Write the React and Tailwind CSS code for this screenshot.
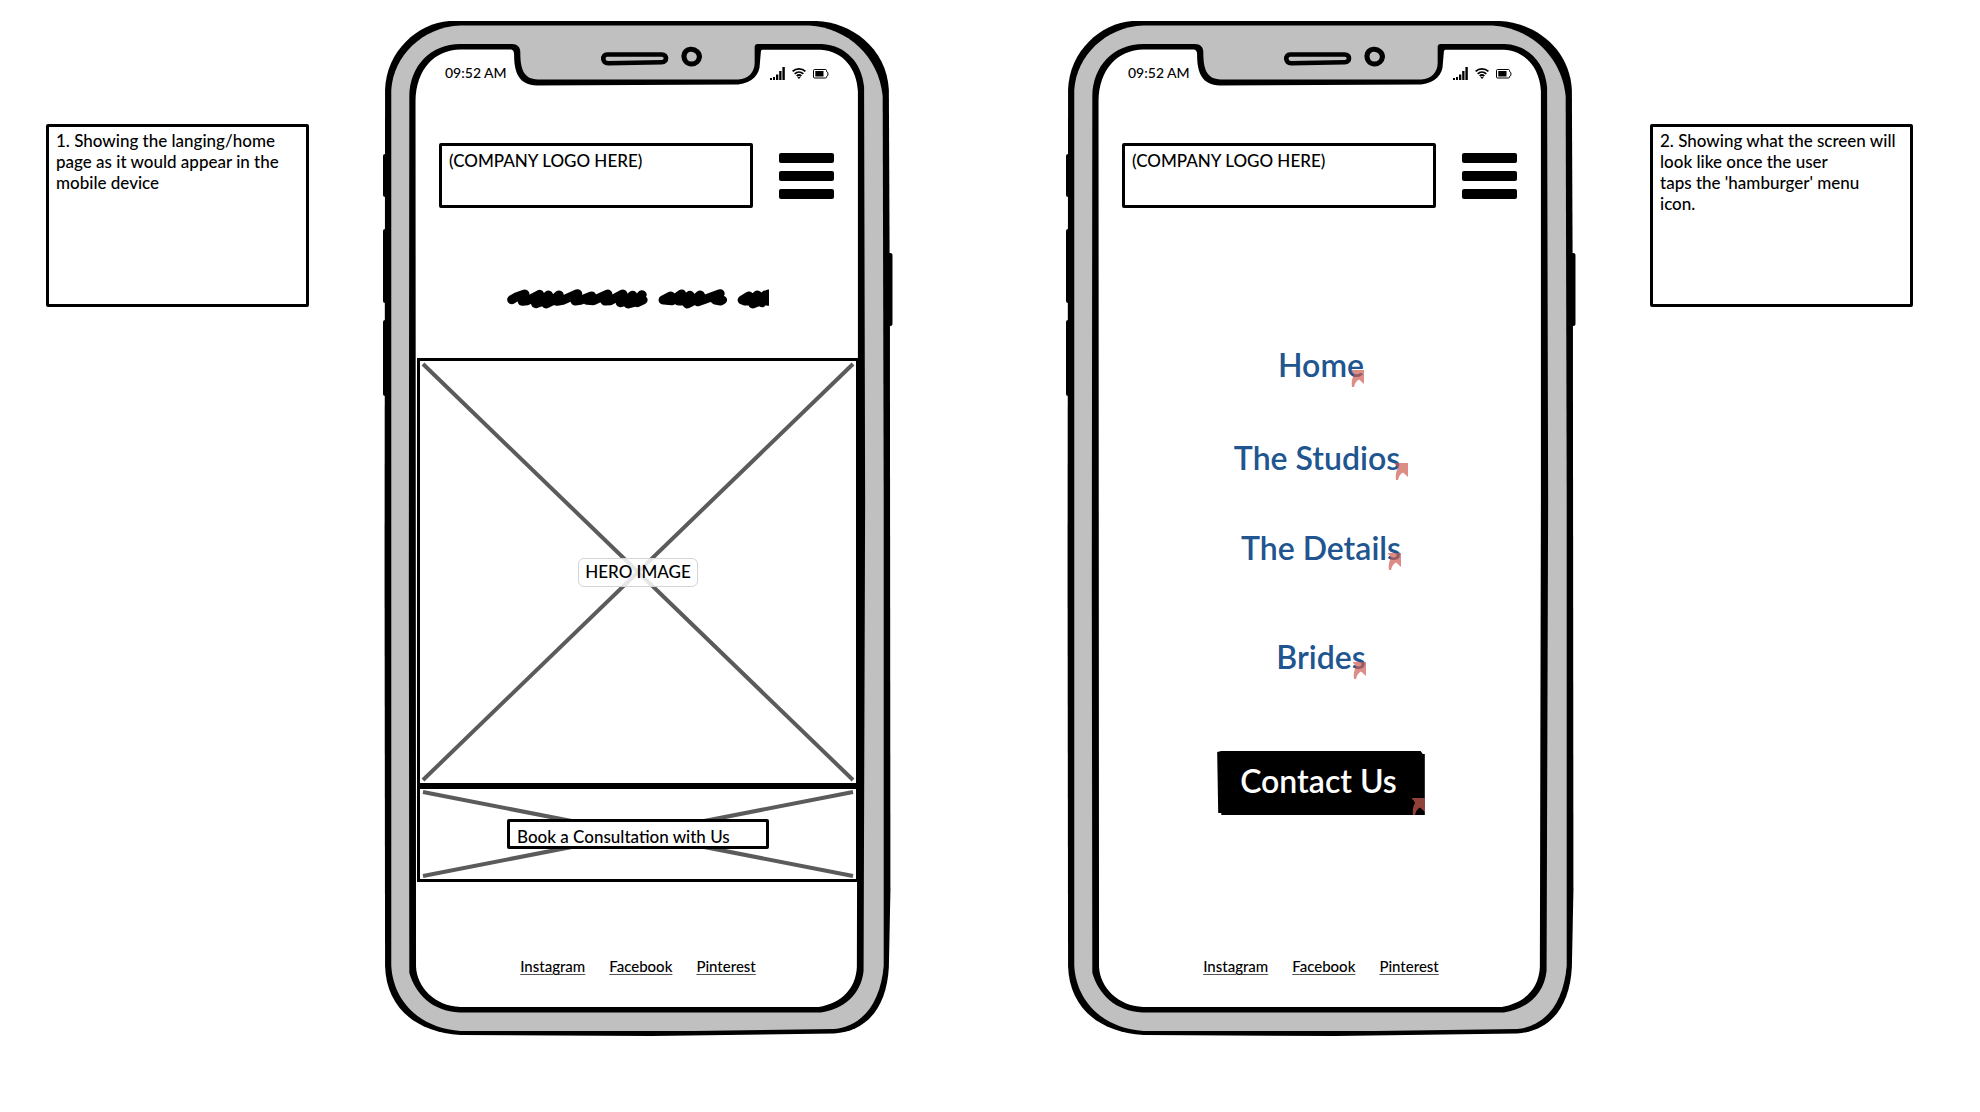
import React from "react";

const SOCIALS = ["Instagram", "Facebook", "Pinterest"];

function DeviceFrame() {
  return (
    <svg
      className="pointer-events-none absolute inset-0 h-full w-full"
      viewBox="0 0 494 1015"
      preserveAspectRatio="none"
      aria-hidden="true"
    >
      <rect x="0" y="133" width="6" height="43" rx="2" />
      <rect x="0" y="208" width="6" height="74" rx="2" />
      <rect x="0" y="299" width="6" height="76" rx="2" />
      <rect x="486" y="232" width="7.5" height="73" rx="2" />
      <path d="M2 69C3 30 34 2 64 0H420C452 1 488 26 490 69L491 300L491.500 870L490 946C488 985 470 1010 437 1012.500L260 1015L75 1014C30 1011 3 985 2 945L1.500 550Z" />
      <path
        fill="#c0c0c0"
        d="M8 69C10 35 38 6 75 4.500H413C450 7 480 35 484 75L485 480L485 945C482 980 466 1005 437 1008L300 1010H75C35 1007 10 980 8 945Z"
      />
      <path d="M25.500 75C26 45 46 23 75 23H125C130 23 133 26 133 31C133 48 136 58 150 58.500H344C354 58 360 51 360 42V26C360 24 361 23 363 23H425C448 24 464 42 466 66L467 480L465.500 950C463 974 446 988 424 991.500H74C48 990 32 974 25.500 952L25 560Z" />
      <path
        fill="#fff"
        d="M31.500 80C32 48 50 29 75 28.500H124C126 29 127 30 127 34C127 52 132 64 149 64.500L344 63.500C358 62 365 53 365 43L366 31C366 29 367 28.700 368 28.700H424C446 30 459 48 460 70L460 480L459 946C458 968 444 982 422 986H75C50 985 33 966 32 946Z"
      />
      <path
        fill="none"
        stroke="#000"
        strokeWidth="4.5"
        d="M217 33.500H270C275.500 33.500 275.500 41 270 41.200L218 42.200C212 42.200 212 33.500 217 33.500Z"
      />
      <path
        fill="none"
        stroke="#000"
        strokeWidth="5"
        d="M298 28.300C303 28 306.500 32 306.500 36C306 40 303 43 299 43C294 43 291.500 39 291.500 35C292 31 294 28.500 298 28.300Z"
      />
    </svg>
  );
}

function StatusIcons() {
  return (
    <div className="flex items-center gap-[7px]">
      <svg width="15" height="13" viewBox="0 0 15 13" role="img" aria-label="Signal strength">
        <rect x="0" y="11" width="2" height="2" />
        <rect x="3" y="10" width="2" height="3" />
        <rect x="6" y="7.5" width="2.300" height="5.500" />
        <rect x="9.200" y="4" width="2.300" height="9" />
        <rect x="12.400" y="0" width="2.400" height="13" />
      </svg>
      <svg width="14" height="13" viewBox="0 0 14 13" fill="none" stroke="#000" role="img" aria-label="Wi-Fi">
        <path strokeWidth="1.800" d="M.6 4.400C4.200 1 9.800 1 13.400 4.400M2.700 6.800C5.200 4.500 8.800 4.500 11.300 6.800M4.700 9C6.100 7.700 7.900 7.700 9.300 9" />
        <path fill="#000" stroke="none" d="M5.400 10.200Q7 9.100 8.600 10.200L7 12Z" />
      </svg>
      <svg width="16" height="13" viewBox="0 0 16 13" role="img" aria-label="Battery">
        <path fill="none" stroke="#000" d="M1.500 2.500H12.500Q13.500 2.500 13.500 3.500V4.500Q15 4.700 15 7T13.500 9.500V10Q13.500 11 12.500 11H1.500Q.5 11 .5 10V3.500Q.5 2.500 1.500 2.500Z" />
        <rect x="2.300" y="4" width="8.200" height="5.500" />
      </svg>
    </div>
  );
}

function Phone({ label, className, children }) {
  return (
    <section
      aria-label={label}
      className={"relative flex min-w-0 flex-1 flex-col px-[34px] pt-[44px] pb-[60px] " + className}
    >
      <DeviceFrame />
      <div className="relative flex items-center justify-between pr-[30px] pl-[28px]">
        <span className="text-sm leading-4">09:52 AM</span>
        <StatusIcons />
      </div>
      <header className="relative mt-[62px] flex items-center gap-[26px] pr-[25px] pl-[22px]">
        <div className="h-[65px] flex-1 rounded-[2px] border-[3px] border-black px-[7px] py-[4px]">
          (COMPANY LOGO HERE)
        </div>
        <button type="button" aria-label="Menu" className="flex w-[55px] flex-col gap-2">
          <span className="h-[10px] rounded-[2px] bg-black" />
          <span className="h-[10px] rounded-[2px] bg-black" />
          <span className="h-[10px] rounded-[2px] bg-black" />
        </button>
      </header>
      <div className="relative flex flex-1 flex-col">{children}</div>
      <footer className="relative flex justify-center gap-[24px] text-[15px] leading-5">
        {SOCIALS.map((name) => (
          <a key={name} href="#" className="underline decoration-[#555] decoration-1 underline-offset-2">
            {name}
          </a>
        ))}
      </footer>
    </section>
  );
}

function Cross() {
  return (
    <svg
      className="absolute inset-[3px] h-[calc(100%-6px)] w-[calc(100%-6px)] overflow-visible"
      aria-hidden="true"
    >
      <g stroke="#5b5b5b" strokeWidth="4">
        <line x1="0" y1="0" x2="100%" y2="100%" />
        <line x1="100%" y1="0" x2="0" y2="100%" />
      </g>
    </svg>
  );
}

function Scribble() {
  return (
    <svg
      className="mt-[81px] self-center"
      width="262"
      height="20"
      viewBox="398 85 765 60"
      preserveAspectRatio="none"
      fill="none"
      stroke="#000"
      strokeWidth="27"
      strokeLinecap="round"
      strokeLinejoin="round"
      role="img"
      aria-label="Headline"
    >
      <path d="M412 117L425 109L450 100L443 122L458 120L493 101L482 129L496 124L519 103L512 130L528 122L550 103L544 122L560 119L604 99L597 121L612 119L645 106L632 119L650 120L692 100L684 121L700 120L736 100L729 126L743 122L765 104L752 130L774 124L792 102L778 126L795 118" />
      <path d="M854 118L876 106L862 119L880 120L908 100L898 121L914 120L932 104L924 130L940 122L962 103L955 123L972 117L1020 99L1006 118L1022 121L1027 118" />
      <path d="M1085 118L1104 106L1092 121L1110 120L1129 103L1116 130L1134 122L1152 103L1142 126L1162 100L1160 122" />
    </svg>
  );
}

function Flag() {
  return (
    <svg
      className="absolute right-0 bottom-0 h-[17px] w-[13px]"
      viewBox="0 0 13 17"
      fill="#cc5c52"
      fillOpacity="0.7"
      aria-hidden="true"
    >
      <path d="M0 0H13V14L8 9.500Q4 11.500 3 17H1Q0 10 3 5Q2 2 0 1Z" />
    </svg>
  );
}

function MenuLink({ children, className }) {
  return (
    <a href="#" className={"relative h-[42px] text-[32px] leading-10 font-semibold text-[#20558f] " + className}>
      {children}
      <Flag />
    </a>
  );
}

function Note({ children, className }) {
  return (
    <aside
      className={
        "mt-[103px] h-[183px] w-[263px] shrink-0 rounded-[2px] border-[3px] border-black px-[7px] py-[3px] " + className
      }
    >
      <p>{children}</p>
    </aside>
  );
}

export default function App() {
  return (
    <main className="flex min-h-screen items-start bg-white pt-[21px] pr-[67px] pb-10 pl-[46px] font-['Lato',sans-serif] text-[17px] leading-[21px] font-medium text-black">
      <Note className="mr-[74px]">1. Showing the langing/home page as it would appear in the mobile device</Note>

      <Phone label="Home page" className="">
        <Scribble />
        <div className="relative mt-[49px] flex h-[428px] items-center justify-center border-[3px] border-black">
          <Cross />
          <span className="relative rounded-md border border-[#d4d4d4] bg-white/85 px-[6px] pt-[2px] pb-[4px]">
            HERO IMAGE
          </span>
        </div>
        <div className="relative mb-[74px] flex h-[96px] items-center justify-center border-[3px] border-black">
          <Cross />
          <button
            type="button"
            className="relative h-[30px] w-[262px] rounded-[2px] border-[3px] border-black bg-white px-[7px] pt-[4px] text-left"
          >
            Book a Consultation with Us
          </button>
        </div>
      </Phone>

      <Phone label="Opened menu" className="ml-[173px]">
        <nav className="flex flex-col items-center pt-[137px]">
          <MenuLink className="mb-[51px]">Home</MenuLink>
          <MenuLink className="mb-[48px] pr-2">The Studios</MenuLink>
          <MenuLink className="mb-[67px]">The Details</MenuLink>
          <MenuLink className="mb-[72px]">Brides</MenuLink>
          <button
            type="button"
            className="relative mb-[141px] h-[64px] bg-black pr-[28px] pb-1 pl-[23px] text-[32px] leading-10 font-semibold text-white [clip-path:polygon(0_1px,2%_0,98%_0,99%_3px,100%_3px,100%_100%,2%_100%,2%_97%,0.5%_97%)]"
          >
            Contact Us
            <Flag />
          </button>
        </nav>
      </Phone>

      <Note className="ml-[74px]">
        2. Showing what the screen will look like once the user
        <br />
        taps the 'hamburger' menu
        <br />
        icon.
      </Note>
    </main>
  );
}
